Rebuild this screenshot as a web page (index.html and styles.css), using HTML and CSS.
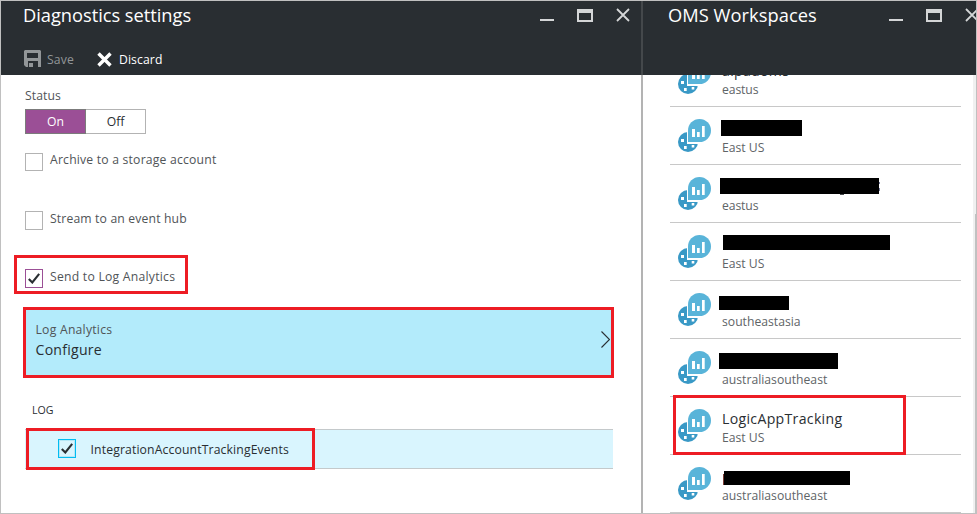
FILE: index.html
```html
<!DOCTYPE html>
<html lang="en">
<head>
<meta charset="utf-8">
<title>Diagnostics settings</title>
<link rel="stylesheet" href="styles.css">
</head>
<body>
<svg class="defs" width="0" height="0" aria-hidden="true">
  <symbol id="min" viewBox="0 0 14 14"><path d="M0 11h14v2H0z" fill="#d4d6d7"/></symbol>
  <symbol id="max" viewBox="0 0 16 13"><path fill="#d4d6d7" fill-rule="evenodd" d="M0 0h16v13H0zM2 4v7h12V4z"/></symbol>
  <symbol id="close" viewBox="0 0 14 14"><path d="M1 1l12 12M13 1L1 13" stroke="#d4d6d7" stroke-width="1.8" fill="none"/></symbol>
  <symbol id="check" viewBox="0 0 12 11"><path d="M.8 6L4.3 9.5 11.2.8" stroke="#292e32" stroke-width="2.1" fill="none"/></symbol>
  <symbol id="oms" viewBox="0 0 33 33">
    <circle cx="10" cy="23" r="10" fill="#3999c6"/>
    <path d="M9 24V11.500A12 12 0 0 1 21 0v24z" fill="#fff"/>
    <path d="M10 23V11.500A11.500 11.500 0 1 1 21.500 23z" fill="#59b4d9"/>
    <path d="M9 24.200h12" stroke="#fff" stroke-width="1.600"/>
    <path d="M14 10h3v8h-3zM19 13h2.700v5H19zM24 7h2.700v11H24z" fill="#fff"/>
    <path d="M3 20h3v3H3zM6 27h2.700v3H6zM13.700 26h2.600v2.600h-2.600z" fill="#fff"/>
  </symbol>
</svg>
<div class="window">
  <section class="blade settings">
    <header class="head">
      <div class="titlebar">
        <h1 class="title">Diagnostics settings</h1>
        <svg class="min"><use href="#min"/></svg>
        <svg class="max"><use href="#max"/></svg>
        <svg class="close"><use href="#close"/></svg>
      </div>
      <div class="commands">
        <svg class="save-icon" viewBox="0 0 17 17"><path fill="#929698" fill-rule="evenodd" d="M1 0h15l1 1v16h-3v-6H4v6H2l-2-2V1zM3 2v6h11V2zM5 13h4v4H5z"/><path d="M3 2h11v1H3z" fill="#929698"/></svg>
        <span class="command save">Save</span>
        <svg class="discard-icon" viewBox="0 0 15 15"><path d="M1.500 1.500l12 12M13.500 1.500l-12 12" stroke="#fff" stroke-width="3.400"/></svg>
        <span class="command discard">Discard</span>
      </div>
    </header>
    <div class="form">
      <div class="label status">Status</div>
      <div class="toggle"><span class="on">On</span><span class="off">Off</span></div>
      <div class="option archive"><span class="box"></span><span class="label opt-archive">Archive to a storage account</span></div>
      <div class="option stream"><span class="box tall"></span><span class="label opt-stream">Stream to an event hub</span></div>
      <div class="option send marked"><span class="box tall checked"><svg class="tick"><use href="#check"/></svg></span><span class="label opt-send">Send to Log Analytics</span></div>
      <div class="configure marked">
        <div class="configure-text"><span class="label opt-log">Log Analytics</span><span class="value">Configure</span></div>
        <svg class="chevron" viewBox="0 0 9 17"><path d="M.5.5l8 8-8 8" fill="none" stroke="#292e32" stroke-width="1.100"/></svg>
      </div>
      <div class="log-title">LOG</div>
      <div class="log-row">
        <div class="log-item marked"><span class="box tall blue"><svg class="tick"><use href="#check"/></svg></span><span class="event">IntegrationAccountTrackingEvents</span></div>
      </div>
    </div>
  </section>
  <section class="blade workspaces">
    <header class="head">
      <div class="titlebar">
        <h1 class="title oms-title">OMS Workspaces</h1>
        <svg class="min"><use href="#min"/></svg>
        <svg class="max"><use href="#max"/></svg>
        <svg class="close"><use href="#close"/></svg>
      </div>
    </header>
    <div class="scroller">
      <ul class="list">
        <li class="item"><svg class="oms"><use href="#oms"/></svg><div class="info"><span class="name">alpadoms</span><span class="region r1">eastus</span></div></li>
        <li class="item"><svg class="oms"><use href="#oms"/></svg><div class="info"><span class="bar b1"></span><span class="region">East US</span></div></li>
        <li class="item"><svg class="oms"><use href="#oms"/></svg><div class="info"><span class="bar b2"></span><span class="region r1">eastus</span></div></li>
        <li class="item"><svg class="oms"><use href="#oms"/></svg><div class="info"><span class="bar b3"></span><span class="region">East US</span></div></li>
        <li class="item"><svg class="oms"><use href="#oms"/></svg><div class="info"><span class="bar b4"></span><span class="region r2">southeastasia</span></div></li>
        <li class="item"><svg class="oms"><use href="#oms"/></svg><div class="info"><span class="bar b5"></span><span class="region r3">australiasoutheast</span></div></li>
        <li class="item selected"><svg class="oms"><use href="#oms"/></svg><div class="info"><span class="name">LogicAppTracking</span><span class="region">East US</span></div></li>
        <li class="item"><svg class="oms"><use href="#oms"/></svg><div class="info"><span class="bar b6"></span><span class="region r3">australiasoutheast</span></div></li>
      </ul>
      <div class="track"><div class="thumb"></div></div>
    </div>
  </section>
</div>
</body>
</html>
```
FILE: styles.css
```css
*, *::before, *::after { box-sizing: border-box; }
body { margin: 0; font-family: "Open Sans", "Noto Sans", sans-serif; font-size: 12.2px; color: #292e32; }
svg { display: block; flex: none; }
.defs { position: absolute; }
.window { width: 977px; height: 514px; display: grid; grid-template-columns: 642px 333px; border: 1px solid #c0c0c0; overflow: hidden; background: #fff; }
.blade { height: 512px; overflow: hidden; display: flex; flex-direction: column; }
.head { height: 74px; flex: none; background: #292e32; color: #fff; }
.settings .head { border-right: 2px solid #44484b; }
.titlebar { height: 28px; display: flex; align-items: center; }
.title { margin: 0 auto 0 22px; font-size: 18.3px; letter-spacing: -.03px; line-height: 28px; font-weight: 400; white-space: nowrap; }
.oms-title { margin-left: 25px; letter-spacing: .04px; }
.min { width: 14px; height: 14px; margin-right: 23px; }
.max { width: 16px; height: 13px; margin-right: 23px; }
.close { width: 14px; height: 14px; margin-right: 11px; }
.workspaces .close { margin-right: -3px; }
.commands { display: flex; align-items: center; height: 24px; margin-top: 19px; padding-left: 23px; }
.save-icon { width: 17px; height: 17px; margin-right: 6px; margin-top: -3px; }
.discard-icon { width: 15px; height: 15px; margin-right: 7px; margin-top: -2px; }
.command { line-height: 24px; }
.save { width: 50px; color: #929698; letter-spacing: .15px; }
.discard { letter-spacing: .1px; }
.form { flex: 1; padding-left: 24px; border-right: 2px solid #b3b3b3; }
.label { color: #505457; line-height: 18px; white-space: nowrap; }
.status { padding-top: 12px; height: 34px; letter-spacing: .1px; }
.toggle { width: 121px; height: 25px; display: flex; text-align: center; line-height: 23px; }
.on { width: 61px; background: #9b4f96; color: #fff; border: 1px solid #7b7b7b; }
.off { flex: 1; border: 1px solid #b3b3b3; border-left: 0; }
.option { display: flex; align-items: flex-start; gap: 7px; }
.box { flex: none; width: 18px; height: 18px; border: 1px solid #b3b3b3; display: grid; place-items: center; background: #fff; }
.tall { height: 19px; }
.option .box { margin-top: 3px; }
.option .label { margin-top: 1px; }
.option .opt-stream, .option .opt-send { margin-top: 2px; }
.opt-archive { letter-spacing: .2px; }
.opt-stream { letter-spacing: .15px; }
.opt-send, .opt-log { letter-spacing: .24px; }
.tick { width: 12px; height: 11px; }
.archive { margin-top: 16px; height: 58px; }
.stream { height: 47px; }
.marked { border: 3px solid #ed1c24; }
.send { width: 174px; height: 39px; margin-left: -11px; padding: 8px 0 0 8px; }
.checked { border-color: #9b4f96; }
.configure { width: 591px; height: 71px; margin: 13px 0 0 -2px; background: #b3ebfb; display: flex; align-items: center; padding: 0 1px 4px 9.5px; }
.configure-text { flex: 1; display: flex; flex-direction: column; }
.value { font-size: 14.1px; line-height: 22px; letter-spacing: .25px; }
.chevron { width: 9px; height: 17px; margin-top: -3px; }
.log-title { margin: 23px 0 0 7px; font-size: 10.6px; line-height: 18px; }
.log-row { width: 588px; height: 40px; margin-top: 10px; background: #d9f5fe; border: solid #c4c9cb; border-width: 1px 0; }
.log-item { width: 289px; height: 42px; margin: -2px 0 0 1px; padding-left: 29px; display: flex; align-items: center; gap: 14.5px; }
.event { letter-spacing: .14px; }
.log-item .box { margin-top: -1px; }
.blue { border-color: #00bcf2; background: #d9f5fe; box-shadow: inset 0 0 0 1px #b5e7f6; }
.scroller { height: 438px; overflow: hidden; display: grid; grid-template-columns: 330px 3px; }
.list { list-style: none; margin: -26px 0 0; padding: 0 12px 0 27px; }
.item { height: 58px; border-bottom: 1px solid #c8c8c8; padding: 12px 0 0 8px; display: flex; }
.oms { width: 33px; height: 33px; margin-right: 11px; }
.info { display: flex; flex-direction: column; align-items: flex-start; }
.name { font-size: 14.1px; line-height: 20px; letter-spacing: .32px; }
.region { color: #606467; line-height: 18px; }
.r1 { letter-spacing: -.1px; }
.bar { position: relative; background: #000; height: 16px; margin: 1px 0 3px; }
.b1 { width: 81px; margin-left: -1px; }
.b2 { width: 159px; margin-left: -2px; }
.b2::before { content: ""; position: absolute; left: 120px; top: 16px; width: 4px; height: 1px; background: #4a4d50; }
.b2::after { content: ""; position: absolute; left: 159px; top: 4px; width: 1px; height: 9px; border: solid #777b9a; border-width: 2px 0 3px; }
.b3 { width: 167px; height: 15px; margin: 0 0 5px 1px; }
.b4 { width: 70px; height: 14px; margin: 3px 0 3px -3px; }
.b5 { width: 119px; margin: 2px 0 2px -3px; }
.b6 { width: 126px; height: 14px; margin: 4px 0 2px 2px; }
.b6::before { content: ""; position: absolute; left: -1px; top: 3px; width: 1px; height: 11px; background: #7a3c35; }
.selected { position: relative; }
.selected::after { content: ""; position: absolute; left: 3px; top: -2px; width: 233px; height: 60px; border: 3px solid #ed1c24; }
.track { background: #f0f0f0; padding: 139px 0 0 2px; }
.thumb { height: 299px; background: #c1c1c1; }
```
